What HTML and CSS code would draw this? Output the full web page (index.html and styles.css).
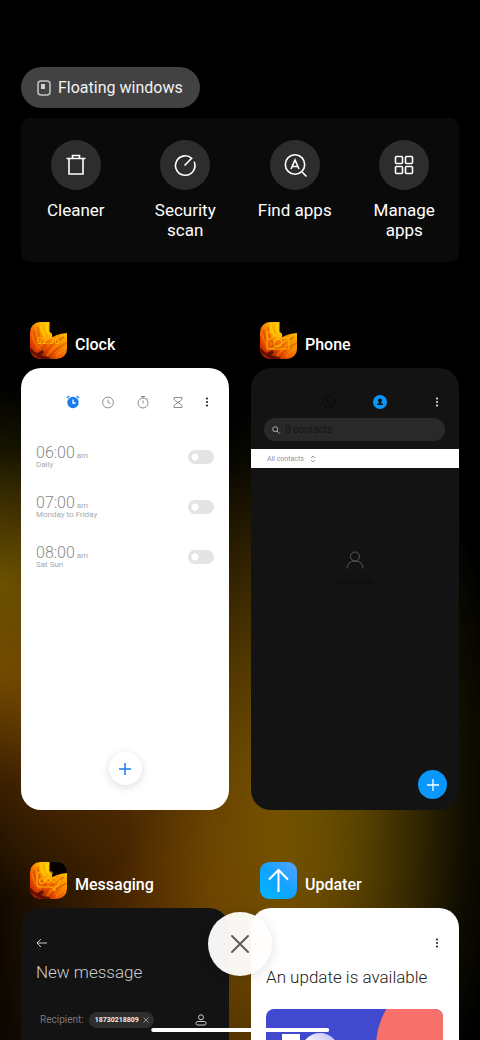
FILE: index.html
```html
<!DOCTYPE html>
<html lang="en">
<head>
<meta charset="utf-8">
<meta name="viewport" content="width=device-width, initial-scale=1">
<title>Recent apps</title>
<link rel="stylesheet" href="styles.css">
</head>
<body>
<svg class="defs" width="0" height="0" aria-hidden="true">
  <defs>
    <linearGradient id="petal-left" x1="0" y1="1" x2="1" y2="0">
      <stop offset="0" stop-color="#8e0c00"/><stop offset=".3" stop-color="#e84a00"/><stop offset=".6" stop-color="#ff9a00"/><stop offset=".9" stop-color="#ffd400"/>
    </linearGradient>
    <linearGradient id="petal-right" x1="0" y1="1" x2="1" y2="0">
      <stop offset="0" stop-color="#7a0a00"/><stop offset=".4" stop-color="#f05a00"/><stop offset="1" stop-color="#ffc000"/>
    </linearGradient>
    <clipPath id="tile"><rect width="37" height="37" rx="10"/></clipPath>
    <g id="flower" clip-path="url(#tile)">
      <rect width="37" height="37" fill="#050200"/>
      <path fill="url(#petal-left)" d="M0 0H19.500V10Q23 11 22 15L24 37H0z"/>
      <path fill="url(#petal-right)" d="M6 37Q8 25 18 18Q25 12 37 11V37z"/>
      <path fill="none" stroke="#ffe000" stroke-width="2.500" opacity=".6" d="M11 1Q10 8 15 14M17 2Q16 8 19 12"/>
      <path fill="none" stroke="#b82000" stroke-width="1.500" opacity=".35" d="M4 8Q3 20 14 30M8 5Q8 18 17 25M14 33Q20 22 34 15M20 35Q25 26 37 21"/>
      <path fill="none" stroke="#ff9a00" stroke-width="2" opacity=".4" d="M2 12Q4 22 12 28M17 34Q22 26 36 18M26 35Q29 30 37 26"/>
      <path fill="none" stroke="#420500" stroke-width="3" opacity=".7" d="M0 27Q4 34 20 37M6 32Q10 33 13 29"/>
    </g>
    <linearGradient id="update-bg" x1="0" y1="1" x2="1" y2="0"><stop stop-color="#00b8ff"/><stop offset=".5" stop-color="#12a2ff"/><stop offset="1" stop-color="#58a4ff"/></linearGradient>
    <linearGradient id="ball" x1="1" y1="0" x2="0" y2="1"><stop stop-color="#b9b5f4"/><stop offset=".6" stop-color="#fff"/></linearGradient>
  </defs>
</svg>

<main class="recents">
  <button class="pill" type="button">
    <svg width="14" height="16" viewBox="0 0 14 16"><rect x="1" y="1" width="12" height="14" rx="3" fill="none" stroke="#c4c4c4" stroke-width="1.500"/><rect x="4" y="4" width="4" height="5" fill="#d0d0d0"/></svg>
    Floating windows
  </button>

  <nav class="tools" aria-label="Tools">
    <button class="tool" type="button">
      <span class="tool-icon"><svg viewBox="0 0 26 26"><path d="M3.500 6.500H22.500M9.500 6.500V3.500H16.500V6.500M6 6.500V22H20V6.500"/></svg></span>
      Cleaner
    </button>
    <button class="tool" type="button">
      <span class="tool-icon"><svg viewBox="0 0 26 26"><path d="M12.500 13.500L19.700 6.300A9.700 9.700 0 1 0 22.200 9.800"/></svg></span>
      Security scan
    </button>
    <button class="tool" type="button">
      <span class="tool-icon"><svg viewBox="0 0 26 26"><circle cx="13" cy="12.500" r="9.700"/><path d="M20 20L24.500 24.500M9 17L13 8L17 17M10.500 14.500H15.500"/></svg></span>
      Find apps
    </button>
    <button class="tool" type="button">
      <span class="tool-icon"><svg viewBox="0 0 26 26"><rect x="4.500" y="4.500" width="7" height="7" rx="1"/><rect x="14.500" y="4.500" width="7" height="7" rx="1"/><rect x="4.500" y="14.500" width="7" height="7" rx="1"/><rect x="14.500" y="14.500" width="7" height="7" rx="1"/></svg></span>
      Manage apps
    </button>
  </nav>

  <section class="apps" aria-label="Recent apps">
    <article class="app">
      <h2 class="app-title">
        <svg width="37" height="37" viewBox="0 0 37 37"><use href="#flower"/><text class="tile-time" x="7" y="22">02:36</text></svg>
        <span>Clock</span>
      </h2>
      <div class="card light">
        <div class="bar">
          <button class="tab" type="button" aria-label="Alarm"><svg width="14" height="14" viewBox="0 0 14 14"><circle cx="7" cy="7.500" r="5.700" fill="#187cf0"/><path d="M1 3L3.300 1M13 3L10.700 1" stroke="#187cf0" stroke-width="1.300"/><path d="M7 4.500V8H9.500" fill="none" stroke="#fff" stroke-width="1.300"/></svg></button>
          <button class="tab" type="button" aria-label="Clock"><svg width="14" height="14" viewBox="0 0 14 14" fill="none" stroke="#8b8b8b"><circle cx="7" cy="7.500" r="5.400"/><path d="M7 4.500V7.500L9.500 8.500"/></svg></button>
          <button class="tab" type="button" aria-label="Stopwatch"><svg width="14" height="14" viewBox="0 0 14 14" fill="none" stroke="#8b8b8b"><circle cx="7" cy="8" r="5"/><path d="M5 1.500H9M7 1.500V3M7 5.500V8.500M11 3.500L12 4.500"/></svg></button>
          <button class="tab" type="button" aria-label="Timer"><svg width="14" height="14" viewBox="0 0 14 14" fill="none" stroke="#8b8b8b"><path d="M3 2.500H11V4Q10 6 7 7.500Q4 9 3 11V12.500H11V11Q10 9 7 7.500Q4 6 3 4z"/></svg></button>
          <button class="more" type="button" aria-label="More"><svg width="4" height="12" viewBox="0 0 4 12" fill="#222"><circle cx="2" cy="2.500" r="1.100"/><circle cx="2" cy="6" r="1.100"/><circle cx="2" cy="9.500" r="1.100"/></svg></button>
        </div>
        <div class="alarms">
          <label class="alarm"><span class="alarm-text"><span class="time">06:00 <small>am</small></span><span>Daily</span></span><input class="switch" type="checkbox"></label>
          <label class="alarm"><span class="alarm-text"><span class="time">07:00 <small>am</small></span><span>Monday to Friday</span></span><input class="switch" type="checkbox"></label>
          <label class="alarm"><span class="alarm-text"><span class="time">08:00 <small>am</small></span><span>Sat Sun</span></span><input class="switch" type="checkbox"></label>
        </div>
        <button class="add add-light" type="button" aria-label="Add alarm"><svg width="14" height="14" viewBox="0 0 14 14"><path d="M7 1V13M1 7H13" stroke="#1a7cf5" stroke-width="1.500"/></svg></button>
      </div>
    </article>

    <article class="app">
      <h2 class="app-title">
        <svg width="37" height="37" viewBox="0 0 37 37"><use href="#flower"/><g fill="none" stroke="#ffc400" stroke-width=".9"><path d="M7 27V10H13L15 13H18V16H29V27zM7 17H11L14 14H20"/><circle cx="18" cy="21" r="4"/><path d="M11 27L29 18"/></g></svg>
        <span>Phone</span>
      </h2>
      <div class="card dark">
        <div class="bar bar-phone">
          <button class="tab tab-wide" type="button" aria-label="Calls"><svg width="14" height="14" viewBox="0 0 14 14" fill="none" stroke="#0b0b0b"><circle cx="7" cy="7" r="6"/><path d="M4.500 4Q5 8.500 9.800 9.800" stroke-width="1.600"/></svg></button>
          <button class="tab tab-wide" type="button" aria-label="Contacts"><svg width="14" height="14" viewBox="0 0 14 14"><circle cx="7" cy="7" r="7" fill="#0a97fb"/><circle cx="7" cy="5.500" r="2" fill="#111"/><path d="M6 7H8V8L10 9V10H4V9L6 8z" fill="#111"/></svg></button>
          <button class="more" type="button" aria-label="More"><svg width="4" height="12" viewBox="0 0 4 12" fill="#ddd"><circle cx="2" cy="2.500" r="1.100"/><circle cx="2" cy="6" r="1.100"/><circle cx="2" cy="9.500" r="1.100"/></svg></button>
        </div>
        <label class="search">
          <svg width="8" height="8" viewBox="0 0 8 8" fill="none" stroke="#aaa"><circle cx="3.200" cy="3.200" r="2.500"/><path d="M5 5L7.500 7.500"/></svg>
          <input type="text" placeholder="0 contacts" aria-label="Search contacts">
        </label>
        <button class="filter" type="button">All contacts <svg width="6" height="8" viewBox="0 0 6 8" fill="none" stroke="#8c91a6" stroke-width=".9"><path d="M1 3L3 1L5 3M1 5L3 7L5 5"/></svg></button>
        <div class="empty">
          <svg width="18" height="18" viewBox="0 0 18 18" fill="none" stroke="#585858"><circle cx="9" cy="5.500" r="4.500"/><path d="M1 17.500Q1.500 10 9 10T17 17.500"/></svg>
          <p>No contacts</p>
        </div>
        <button class="add add-blue" type="button" aria-label="Add contact"><svg width="12" height="12" viewBox="0 0 12 12"><path d="M6 0V12M0 6H12" stroke="#fff" stroke-width="1.300"/></svg></button>
      </div>
    </article>

    <article class="app">
      <h2 class="app-title">
        <svg width="37" height="37" viewBox="0 0 37 37"><use href="#flower"/><g fill="none" stroke="#ffc400" stroke-width=".9"><path d="M22 12V10H10Q7 10 7 14V22Q7 25 10 25H22L25 29V25Q29 25 29 21V16"/><circle cx="12" cy="19" r="2.500"/><circle cx="18" cy="18" r="2.500"/><circle cx="24" cy="18" r="2.500"/></g></svg>
        <span>Messaging</span>
      </h2>
      <div class="card dark">
        <div class="page-head">
          <button class="back" type="button" aria-label="Back"><svg width="12" height="10" viewBox="0 0 12 10" fill="none" stroke="#ccc"><path d="M5 1L1 5L5 9M1 5H11"/></svg></button>
          <h3 class="headline">New message</h3>
        </div>
        <div class="recipient">
          <span>Recipient:</span>
          <button class="chip" type="button">18730218809 <svg width="6" height="6" viewBox="0 0 6 6" stroke="#aaa" stroke-width=".8"><path d="M0.500 0.500L5.500 5.500M5.500 0.500L0.500 5.500"/></svg></button>
          <button class="pick" type="button" aria-label="Choose contact"><svg width="12" height="12" viewBox="0 0 12 12" fill="none" stroke="#ccc"><circle cx="6" cy="3.300" r="2.500"/><rect x="1" y="7.500" width="10" height="3.500" rx="1.700"/></svg></button>
        </div>
      </div>
    </article>

    <article class="app">
      <h2 class="app-title">
        <svg width="37" height="37" viewBox="0 0 37 37"><rect width="37" height="37" rx="9" fill="url(#update-bg)"/><path d="M18.500 30V8M9 17.500L18.500 8L28 17.500" fill="none" stroke="#fff" stroke-width="2"/></svg>
        <span>Updater</span>
      </h2>
      <div class="card light">
        <div class="page-head page-head-end">
          <button class="more" type="button" aria-label="More"><svg width="4" height="12" viewBox="0 0 4 12" fill="#222"><circle cx="2" cy="2.500" r="1.100"/><circle cx="2" cy="6" r="1.100"/><circle cx="2" cy="9.500" r="1.100"/></svg></button>
          <h3 class="headline">An update is available</h3>
        </div>
        <svg class="banner" viewBox="0 0 177 100" role="img" aria-label="Update artwork"><rect width="177" height="100" fill="#4149ce"/><circle cx="185" cy="38" r="75" fill="#f7706a"/><rect x="16" y="25" width="18" height="60" fill="#fff"/><circle cx="54" cy="43" r="19" fill="url(#ball)"/></svg>
      </div>
    </article>
  </section>

  <button class="close" type="button" aria-label="Close all"><svg width="20" height="20" viewBox="0 0 20 20"><path d="M2 2L18 18M18 2L2 18" stroke="#5e5d5a" stroke-width="2" stroke-linecap="round"/></svg></button>
  <div class="home-bar"></div>
</main>
</body>
</html>
```

FILE: styles.css
```css
* { box-sizing: border-box; }

body {
  margin: 0;
  background: #000;
  color: #fff;
  font-family: Roboto, "Liberation Sans", sans-serif;
}

button {
  margin: 0;
  padding: 0;
  border: 0;
  background: none;
  color: inherit;
  font: inherit;
}

h2, h3, p { margin: 0; }
svg { display: block; flex: none; }
.defs { position: absolute; }

.recents {
  position: relative;
  height: 100vh;
  overflow: hidden;
  padding: 67px 21px 0;
  background:
    radial-gradient(ellipse 40% 19% at 0 56%, #443c00, #000),
    radial-gradient(ellipse 40% 22% at 0 65%, #5a2e00, #000),
    radial-gradient(ellipse 40% 40% at 66% 76%, #403800, #383000 25%, #000),
    radial-gradient(ellipse 52% 42% at 44% 86%, #5a3000, #4c2800 30%, #000),
    #000;
  background-blend-mode: screen;
}

.pill {
  display: flex;
  align-items: center;
  gap: 7px;
  height: 41px;
  padding: 0 17px 0 16px;
  border-radius: 21px;
  background: #424242;
  color: #f2f2f2;
  font-size: 16px;
  line-height: 20px;
}

.tools {
  display: grid;
  grid-template-columns: repeat(4, 1fr);
  margin-top: 10px;
  padding: 22px 0;
  border-radius: 9px;
  background: #0a0a0a;
}

.tool {
  display: flex;
  flex-direction: column;
  align-items: center;
  gap: 10px;
  padding: 0 16px;
  font-size: 17px;
  line-height: 20px;
  text-align: center;
}

.tool-icon {
  display: grid;
  place-items: center;
  width: 50px;
  height: 50px;
  border-radius: 50%;
  background: #2d2d2d;
}

.tool-icon svg {
  width: 26px;
  height: 26px;
  fill: none;
  stroke: #fff;
  stroke-width: 1.6;
}

.apps {
  display: grid;
  grid-template-columns: 1fr 1fr;
  gap: 52px 22px;
  margin-top: 60px;
}

.app-title {
  display: flex;
  align-items: center;
  gap: 8px;
  height: 37px;
  margin: 0 0 9px 9px;
  font-size: 16px;
  font-weight: 500;
  line-height: 20px;
}

.app-title span { padding-top: 8px; }

.tile-time {
  fill: #ffc400;
  font-size: 9px;
  font-weight: 400;
}

.card {
  display: flex;
  flex-direction: column;
  aspect-ratio: 208 / 442;
  overflow: hidden;
  border-radius: 20px;
}

.light { background: #fff; color: #222; }
.dark { background: #131313; color: #ccc; }

.bar {
  display: flex;
  justify-content: flex-end;
  padding: 22px 10px 0 0;
}

.bar-phone { padding-bottom: 4px; }

.tab, .more {
  display: grid;
  place-items: center;
  width: 35px;
  height: 24px;
}

.more { width: 24px; }
.tab-wide { width: 51px; }
.bar-phone .more { margin-left: 20px; }

.alarms { padding: 18px 15px 0; }

.alarm {
  display: flex;
  align-items: center;
  justify-content: space-between;
  height: 50px;
}

.alarm-text {
  display: flex;
  flex-direction: column;
  color: #a8a8a8;
  font-size: 8px;
  line-height: 9px;
}

.time {
  color: #888;
  font-size: 16px;
  font-weight: 300;
  line-height: 14px;
}

.time small {
  margin-left: -2px;
  color: #a8a8a8;
  font-size: 8px;
  font-weight: 400;
  line-height: 8px;
}

.switch {
  appearance: none;
  width: 26px;
  height: 14px;
  margin: 0;
  border-radius: 7px;
  background: radial-gradient(circle at 7px 7px, #fff 3px, #e4e4e4 4px);
}

.add {
  display: grid;
  place-items: center;
  margin-top: auto;
  border-radius: 50%;
}

.add-light {
  align-self: center;
  width: 33px;
  height: 33px;
  margin-bottom: 25px;
  background: #fff;
  box-shadow: 0 2px 10px rgba(0, 0, 0, .14);
}

.add-blue {
  align-self: flex-end;
  width: 29px;
  height: 29px;
  margin: auto 12px 11px 0;
  background: #0a97fb;
}

.search {
  display: flex;
  align-items: center;
  gap: 5px;
  height: 23px;
  margin: 0 14px 8px 13px;
  padding: 0 8px;
  border-radius: 12px;
  background: #292929;
}

.search input {
  flex: 1;
  min-width: 0;
  padding: 0;
  border: 0;
  background: none;
  color: #151515;
  font: 10px/16px Roboto, sans-serif;
}

.search input::placeholder { color: #151515; opacity: 1; }

.filter {
  display: flex;
  align-items: center;
  gap: 6px;
  height: 19px;
  padding: 0 16px;
  background: #fff;
  color: #8c91a6;
  font-size: 7px;
  line-height: 10px;
}

.empty {
  display: flex;
  flex-direction: column;
  align-items: center;
  gap: 8px;
  padding-top: 83px;
  color: #0b0b0b;
  font-size: 7px;
  line-height: 10px;
}

.page-head {
  display: flex;
  flex-direction: column;
  align-items: flex-start;
  padding: 23px 15px 0;
}

.page-head-end .more { align-self: flex-end; margin-right: -5px; }
.page-head-end .headline { margin-top: 10px; }

.back {
  display: grid;
  place-items: center;
  height: 24px;
}

.headline {
  margin-top: 5px;
  font-size: 17px;
  font-weight: 300;
  line-height: 24px;
  white-space: nowrap;
}

.recipient {
  display: flex;
  align-items: center;
  margin-top: 28px;
  padding: 0 22px 0 19px;
  color: #777;
  font-size: 10px;
  line-height: 16px;
}

.chip {
  display: flex;
  align-items: center;
  gap: 4px;
  height: 16px;
  margin-left: 5px;
  padding: 0 5px 0 6px;
  border-radius: 8px;
  background: #2e2e2e;
  color: #eee;
  font-size: 7px;
  font-weight: 700;
}

.pick { margin-left: auto; }

.banner {
  margin: 20px 16px 0 15px;
  border-radius: 8px;
}

.close {
  position: absolute;
  bottom: 64px;
  left: 50%;
  display: grid;
  place-items: center;
  width: 64px;
  height: 64px;
  margin-left: -32px;
  border-radius: 50%;
  background: rgba(255, 254, 252, .96);
  box-shadow: 0 2px 12px rgba(0, 0, 0, .12);
}

.home-bar {
  position: absolute;
  bottom: 8px;
  left: 50%;
  width: 37%;
  height: 4px;
  border-radius: 2px;
  background: #fff;
  transform: translateX(-50%);
}
```
